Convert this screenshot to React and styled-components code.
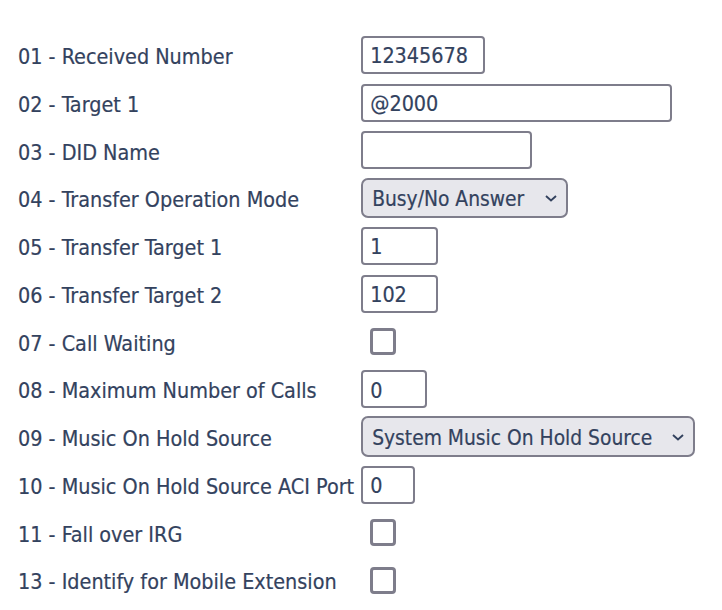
import React from 'react';
import styled, { createGlobalStyle } from 'styled-components';

const GlobalStyle = createGlobalStyle`
  body {
    margin: 8px;
    background: #ffffff;
    font-family: 'DejaVu Sans Condensed', 'DejaVu Sans', sans-serif;
    font-stretch: condensed;
    color: #33425e;
  }
`;

const Form = styled.div`
  display: grid;
  grid-template-columns: max-content 1fr;
  grid-auto-rows: 47.75px;
  column-gap: 7px;
  align-items: center;
  padding-top: 23px;
`;

const Label = styled.div`
  padding: 4px 0 0 10px;
  font-size: 21.4px;
  line-height: 1;
  white-space: nowrap;
  -webkit-text-stroke: 0.2px #33425e;
`;

const Field = styled.div`
  display: flex;
  align-items: center;
`;

const TextInput = styled.input`
  box-sizing: border-box;
  width: ${p => p.$w}px;
  height: 38px;
  padding: 2px 7px 0;
  border: 2px solid #7e7d8b;
  border-radius: 4px;
  background: #fff;
  font-family: inherit;
  font-stretch: condensed;
  font-size: 21.4px;
  color: #33425e;
  -webkit-text-stroke: 0.2px #33425e;
  outline: none;
`;

const SelectWrap = styled.div`
  position: relative;
  width: ${p => p.$w}px;
`;

const Select = styled.select`
  box-sizing: border-box;
  width: 100%;
  height: ${p => p.$h}px;
  padding: 2px 30px 0 9px;
  border: 2px solid #7e7d8b;
  border-radius: 7px;
  background: #e7e7ec;
  font-family: inherit;
  font-stretch: condensed;
  font-size: 20.8px;
  color: #33425e;
  -webkit-text-stroke: 0.2px #33425e;
  appearance: none;
  outline: none;
`;

const Chevron = styled.svg`
  position: absolute;
  right: 11px;
  top: 50%;
  margin-top: -3px;
  pointer-events: none;
`;

const Check = styled.input.attrs({ type: 'checkbox' })`
  appearance: none;
  box-sizing: border-box;
  width: 26px;
  height: 27px;
  margin: 0 0 0 9px;
  border: 3px solid #7e7d8b;
  border-radius: 4px;
  background: #fff;
`;

const rows = [
  { label: '01 - Received Number', type: 'text', value: '12345678', w: 124 },
  { label: '02 - Target 1', type: 'text', value: '@2000', w: 311 },
  { label: '03 - DID Name', type: 'text', value: '', w: 171 },
  { label: '04 - Transfer Operation Mode', type: 'select', value: 'Busy/No Answer', w: 207, h: 40 },
  { label: '05 - Transfer Target 1', type: 'text', value: '1', w: 77 },
  { label: '06 - Transfer Target 2', type: 'text', value: '102', w: 77 },
  { label: '07 - Call Waiting', type: 'check' },
  { label: '08 - Maximum Number of Calls', type: 'text', value: '0', w: 66 },
  { label: '09 - Music On Hold Source', type: 'select', value: 'System Music On Hold Source', w: 334, h: 41 },
  { label: '10 - Music On Hold Source ACI Port', type: 'text', value: '0', w: 54 },
  { label: '11 - Fall over IRG', type: 'check' },
  { label: '13 - Identify for Mobile Extension', type: 'check' },
];

const renderField = (row) => {
  if (row.type === 'check') return <Check />;
  if (row.type === 'select') {
    return (
      <SelectWrap $w={row.w}>
        <Select $h={row.h} defaultValue={row.value}>
          <option>{row.value}</option>
        </Select>
        <Chevron width="12" height="7" viewBox="0 0 12 7">
          <path d="M1 1l5 4.5L11 1" fill="none" stroke="#33425e" strokeWidth="1.9" />
        </Chevron>
      </SelectWrap>
    );
  }
  return <TextInput $w={row.w} defaultValue={row.value} />;
};

const App = () => (
  <>
    <GlobalStyle />
    <Form>
      {rows.map((row) => (
        <React.Fragment key={row.label}>
          <Label>{row.label}</Label>
          <Field>{renderField(row)}</Field>
        </React.Fragment>
      ))}
    </Form>
  </>
);

export default App;
